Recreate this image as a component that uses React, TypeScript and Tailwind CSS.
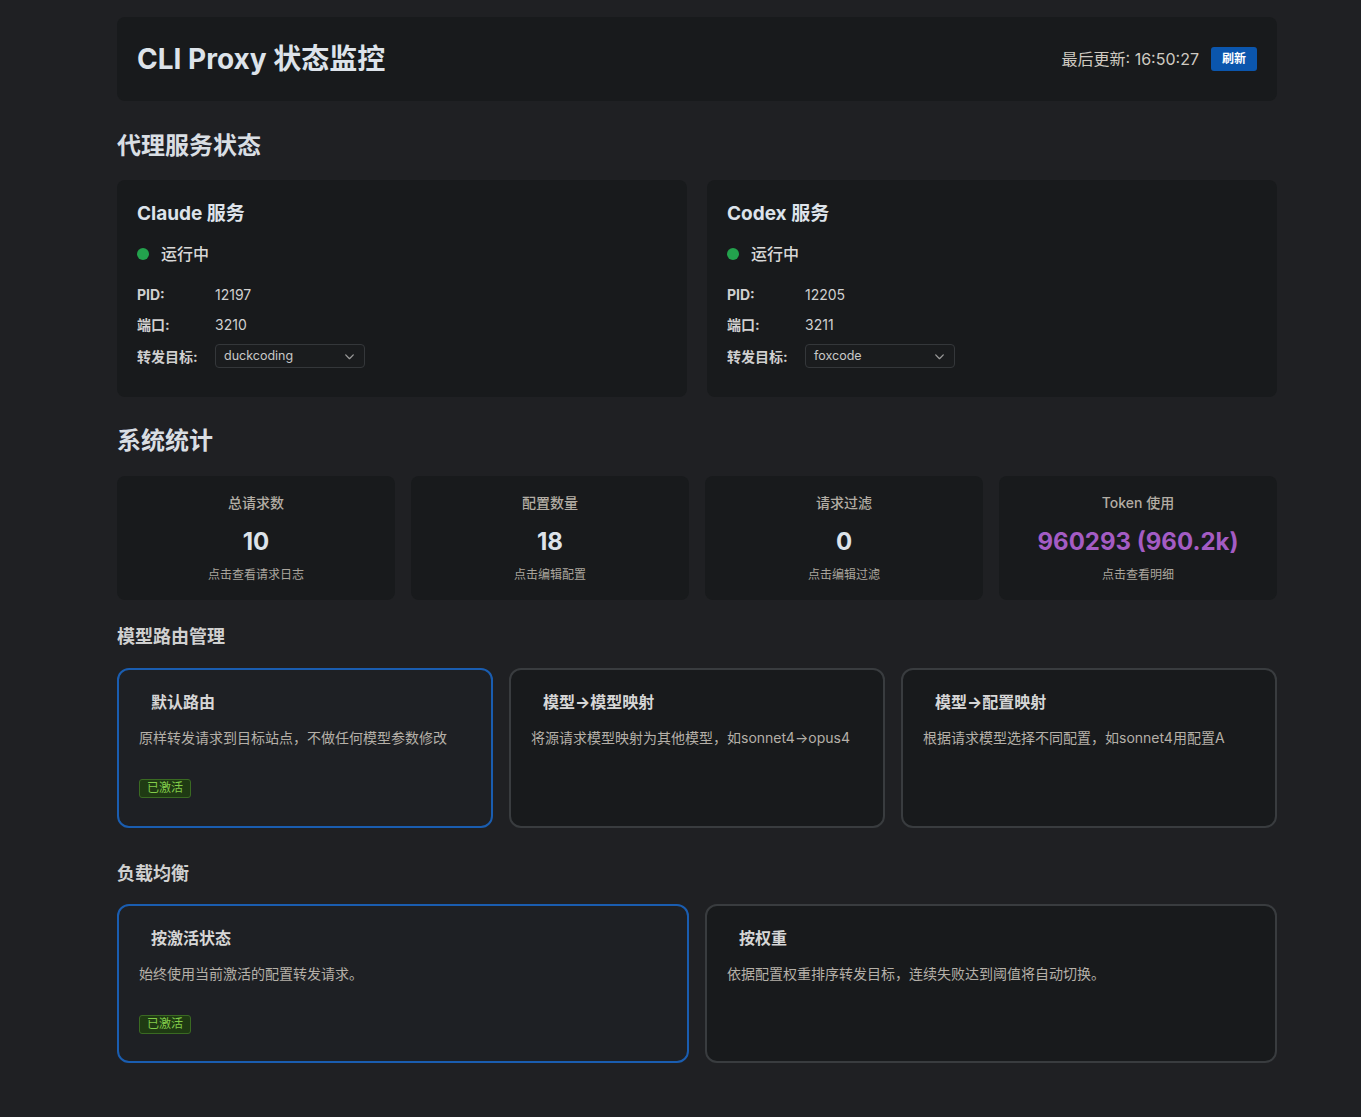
import React from "react";

const font = { fontFamily: 'Inter, "Noto Sans CJK SC", "Noto Sans", sans-serif' };

function Chevron() {
  return (
    <svg width="13" height="13" viewBox="0 0 12 12" fill="none" className="text-[#9a9a9a]">
      <path d="M2.5 4.5 L6 8 L9.5 4.5" stroke="currentColor" strokeWidth="1.2" strokeLinecap="round" strokeLinejoin="round" />
    </svg>
  );
}

function ServiceCard({ name, pid, port, target }: { name: string; pid: string; port: string; target: string }) {
  return (
    <div className="flex-1 rounded-lg bg-[#181a1c] px-5 pt-[22px] pb-[29px]">
      <div className="text-[19px] font-bold leading-[24px] text-[#dde3ea]">{name}</div>
      <div className="mt-[17px] flex items-center gap-[12px]">
        <span className="h-3 w-3 rounded-full bg-[#23a24d]" />
        <span className="text-[16px] font-medium leading-[22px] text-[#d8d8d8]">运行中</span>
      </div>
      <div className="mt-[20px] flex items-center text-[14px] leading-[20px]">
        <span className="w-[78px] font-bold text-[#d0d0d0]">PID:</span>
        <span className="text-[#d0d0d0]">{pid}</span>
      </div>
      <div className="mt-[10px] flex items-center text-[14px] leading-[20px]">
        <span className="w-[78px] font-bold text-[#d0d0d0]">端口:</span>
        <span className="text-[#d0d0d0]">{port}</span>
      </div>
      <div className="mt-[9px] flex items-center text-[14px]">
        <span className="w-[78px] font-bold text-[#d0d0d0]">转发目标:</span>
        <div className="flex h-[24px] w-[150px] items-center justify-between rounded border border-[#34373a] bg-[#1a1c1e] pl-[8px] pr-[8px] text-[12.5px] text-[#c8c8c8]">
          <span>{target}</span>
          <Chevron />
        </div>
      </div>
    </div>
  );
}

function StatCard({ title, value, sub, purple }: { title: string; value: string; sub: string; purple?: boolean }) {
  return (
    <div className="flex h-[124px] flex-1 flex-col items-center rounded-lg bg-[#181a1c] pt-[18px]">
      <div className="text-[14px] font-medium leading-[18px] text-[#b3ada4]">{title}</div>
      <div className={`mt-[15px] text-[24px] font-bold leading-[30px] ${purple ? "text-[#a45cc4]" : "text-[#dde3ea]"}`}>{value}</div>
      <div className="mt-[10px] text-[12px] leading-[16px] text-[#aaa59d]">{sub}</div>
    </div>
  );
}

function Badge() {
  return (
    <span className="inline-flex h-[19px] items-center rounded-[3px] border border-[#3a6a22] bg-[#1f3a13] px-[7px] text-[12px] leading-none text-[#82cc4a]">
      已激活
    </span>
  );
}

function OptionCard({ title, desc, active, h }: { title: string; desc: string; active?: boolean; h: string }) {
  return (
    <div
      className={`flex-1 rounded-xl border-2 px-5 pt-[21px] ${h} ${
        active ? "border-[#1a5db0] bg-[#1e2024]" : "border-[#393c3f] bg-[#181a1c]"
      }`}
    >
      <div className="pl-[12px] text-[16px] font-bold leading-[22px] text-[#d6d6d6]">{title}</div>
      <div className="mt-[15px] text-[14px] leading-[20px] text-[#b5b0a8]">{desc}</div>
      {active && (
        <div className="mt-[26px]">
          <Badge />
        </div>
      )}
    </div>
  );
}

export default function App() {
  return (
    <div className="min-h-[1117px] w-full bg-[#1f2023]" style={font}>
      <div className="ml-[117px] w-[1160px] pt-[17px] pb-[54px]">
        <div className="flex h-[84px] items-center justify-between rounded-lg bg-[#181a1c] px-5">
          <h1 className="text-[28px] font-bold leading-[34px] text-[#dde3ea]">CLI Proxy 状态监控</h1>
          <div className="flex items-center gap-3">
            <span className="text-[16px] text-[#cfcac2]">最后更新: 16:50:27</span>
            <button className="h-[24px] rounded-[3px] bg-[#0b56ad] px-[11px] text-[12px] font-bold text-white">刷新</button>
          </div>
        </div>

        <h2 className="mt-[29px] text-[24px] font-bold leading-[32px] text-[#d9dee3]">代理服务状态</h2>
        <div className="mt-[18px] flex gap-5">
          <ServiceCard name="Claude 服务" pid="12197" port="3210" target="duckcoding" />
          <ServiceCard name="Codex 服务" pid="12205" port="3211" target="foxcode" />
        </div>

        <h2 className="mt-[28px] text-[24px] font-bold leading-[32px] text-[#d9dee3]">系统统计</h2>
        <div className="mt-[19px] flex gap-4">
          <StatCard title="总请求数" value="10" sub="点击查看请求日志" />
          <StatCard title="配置数量" value="18" sub="点击编辑配置" />
          <StatCard title="请求过滤" value="0" sub="点击编辑过滤" />
          <StatCard title="Token 使用" value="960293 (960.2k)" sub="点击查看明细" purple />
        </div>

        <h3 className="mt-[24px] text-[18px] font-bold leading-[26px] text-[#d0d0d0]">模型路由管理</h3>
        <div className="mt-[18px] flex gap-4">
          <OptionCard h="h-[160px]" active title="默认路由" desc="原样转发请求到目标站点，不做任何模型参数修改" />
          <OptionCard h="h-[160px]" title="模型→模型映射" desc="将源请求模型映射为其他模型，如sonnet4→opus4" />
          <OptionCard h="h-[160px]" title="模型→配置映射" desc="根据请求模型选择不同配置，如sonnet4用配置A" />
        </div>

        <h3 className="mt-[33px] text-[18px] font-bold leading-[26px] text-[#d0d0d0]">负载均衡</h3>
        <div className="mt-[17px] flex gap-4">
          <OptionCard h="h-[159px]" active title="按激活状态" desc="始终使用当前激活的配置转发请求。" />
          <OptionCard h="h-[159px]" title="按权重" desc="依据配置权重排序转发目标，连续失败达到阈值将自动切换。" />
        </div>
      </div>
    </div>
  );
}
